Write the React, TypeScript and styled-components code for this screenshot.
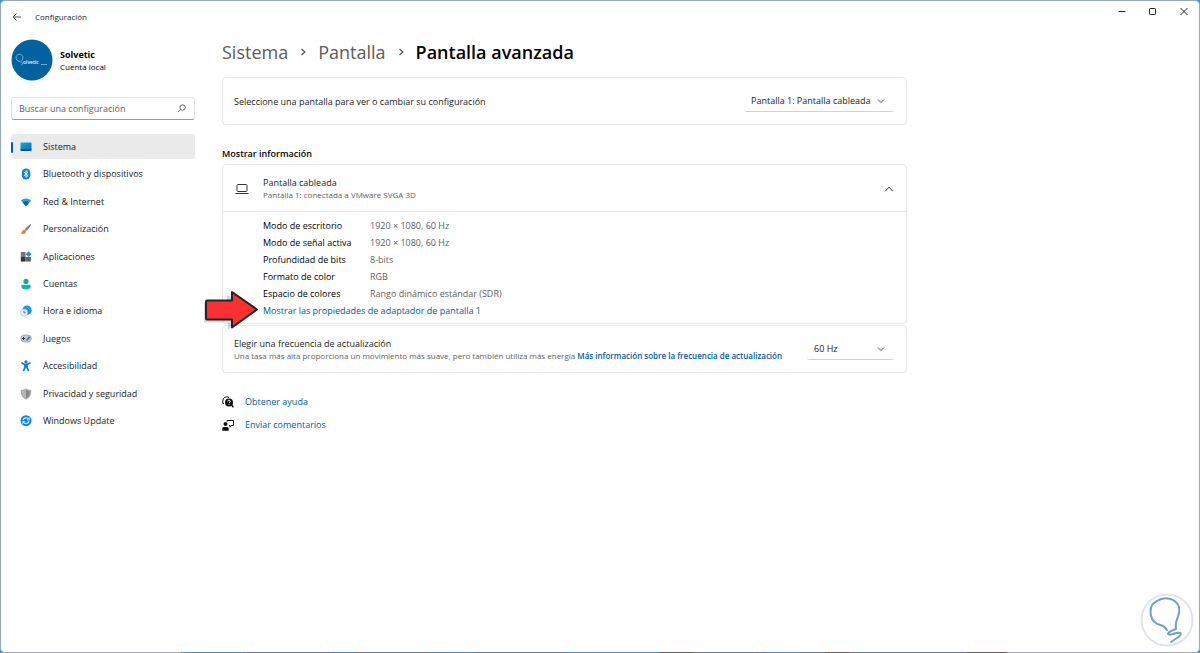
import React from "react";
import styled, { createGlobalStyle } from "styled-components";

const GlobalStyle = createGlobalStyle`
  *, *::before, *::after { box-sizing: border-box; }
  body {
    margin: 0;
    background: #4a90cf;
    font-family: "Open Sans", "Noto Sans", sans-serif;
    font-size: 9px;
    line-height: 12px;
    color: #1b1b1b;
  }
  button, input, select { font: inherit; color: inherit; }
  a { color: #005a9e; text-decoration: none; font-weight: 600; }
  ul, ol, dl, dd, h1, h2, p { margin: 0; padding: 0; list-style: none; font-weight: inherit; }
`;

const Window = styled.div`
  position: relative;
  display: flex;
  flex-direction: column;
  min-height: 100vh;
  background: #fff;
  border: 1px solid #94a9b5;
  border-bottom-color: #a8a9ae;
  border-radius: 5px;
`;

const TaskbarEdge = styled.div`
  position: absolute;
  left: 15%;
  right: 16%;
  bottom: -1px;
  height: 1px;
  background: linear-gradient(
    90deg,
    #4196c8 0 8%, #6c76a0 8% 18%, #3f92c8 18% 21%, #6c76a0 21% 30%, #4590c6 30% 36%,
    #6c76a0 36% 46%, #4c8fc8 46% 58%, #665e62 58% 62%, #6c76a0 62% 70%, #4c8fc8 70% 75%,
    #6c76a0 75% 78%, #665e62 78% 81%, #6c76a0 81% 95%, #665e62 95%
  );
`;

const TitleBar = styled.header`
  display: flex;
  align-items: flex-start;
  justify-content: space-between;
  height: 34px;
`;

const TitleGroup = styled.div`
  display: flex;
  align-items: center;
  gap: 12px;
  padding: 10px 0 0 10px;
  font-size: 8px;
`;

const IconButton = styled.button`
  display: flex;
  align-items: center;
  justify-content: center;
  padding: 0;
  border: 0;
  background: none;
  color: #222;
`;

const WindowControls = styled.div`
  display: flex;
`;

const ControlButton = styled(IconButton)`
  width: 31px;
  height: 20px;
`;

const Body = styled.div`
  display: flex;
  flex: 1;
  align-items: flex-start;
  gap: 27px;
  padding: 0 24px 24px 10px;
`;

const Sidebar = styled.aside`
  flex: 0 0 184px;
`;

const Account = styled.div`
  display: flex;
  align-items: center;
  gap: 7px;
  padding-top: 4px;
`;

const AccountText = styled.div`
  padding-top: 2px;
`;

const AccountName = styled.p`
  font-size: 9px;
  font-weight: 700;
  color: #000;
`;

const AccountKind = styled.p`
  font-size: 8px;
  color: #000;
`;

const SearchBox = styled.label`
  display: flex;
  align-items: center;
  height: 23px;
  margin-top: 16px;
  padding: 0 8px 0 7px;
  border: 1px solid #e4e4e4;
  border-bottom-color: #9a9a9a;
  border-radius: 3px;
`;

const SearchInput = styled.input`
  flex: 1;
  min-width: 0;
  padding: 0;
  border: 0;
  outline: 0;
  background: none;
  &::placeholder { color: #606060; opacity: 1; }
`;

const NavList = styled.ul`
  display: flex;
  flex-direction: column;
  justify-content: space-between;
  min-height: 299px;
  margin-top: 14px;
`;

const NavItem = styled.a<{ $active?: boolean }>`
  display: flex;
  align-items: center;
  gap: 10px;
  height: 25px;
  padding-top: 1px;
  border-radius: 3px;
  background: ${(p) => (p.$active ? "#eaeaea" : "transparent")};
  color: #1b1b1b;
  font-weight: 400;
  &::before {
    content: "";
    width: 2px;
    height: 11px;
    margin-right: -4px;
    border-radius: 1px;
    background: ${(p) => (p.$active ? "#0a57a8" : "transparent")};
  }
`;

const Main = styled.main`
  flex: 0 1 685px;
  min-width: 0;
`;

const Breadcrumb = styled.ol`
  display: flex;
  align-items: center;
  gap: 11px;
  padding-top: 5px;
  font-size: 18px;
  line-height: 24px;
  color: #5b5b5b;
`;

const Crumb = styled.li`
  display: flex;
  align-items: center;
  gap: 11px;
  a { color: inherit; font-weight: 500; }
  h1 { font-size: 18px; font-weight: 600; color: #000; }
`;

const Card = styled.section`
  border: 1px solid #e7e7e7;
  border-radius: 4px;
`;

const SettingCard = styled(Card)`
  display: flex;
  align-items: center;
  justify-content: space-between;
  gap: 16px;
  min-height: 48px;
  padding: 0 12px 0 11px;
`;

const SettingText = styled.div`
  padding-top: 2px;
`;

const PickerCard = styled(SettingCard)`
  margin-top: 13px;
`;

const SelectShell = styled.div<{ $width: number }>`
  display: grid;
  align-items: center;
  width: ${(p) => p.$width}px;
  height: 22px;
  border-bottom: 1px solid #d2d2d2;
  border-radius: 3px;
  > * { grid-area: 1 / 1; }
  svg { justify-self: end; margin-right: 9px; pointer-events: none; }
`;

const Select = styled.select`
  appearance: none;
  width: 100%;
  height: 21px;
  padding: 1px 20px 0 7px;
  border: 0;
  border-radius: 3px;
  background: none;
`;

const SectionTitle = styled.h2`
  margin: 23px 0 4px;
  font-size: 9px;
  font-weight: 600;
  color: #000;
`;

const DisplayHeader = styled.div`
  display: flex;
  align-items: center;
  gap: 14px;
  height: 47px;
  padding: 2px 12px 0 12px;
  border-bottom: 1px solid #e7e7e7;
`;

const Grow = styled.div`
  flex: 1;
`;

const Hint = styled.p`
  font-size: 8px;
  color: #616161;
`;

const Details = styled.div`
  padding: 5px 12px 4px 40px;
  line-height: 17px;
`;

const DetailList = styled.dl`
  display: grid;
  grid-template-columns: 107px 1fr;
  color: #000;
  dd { color: #616161; }
`;

const AdapterRow = styled.div`
  position: relative;
  a { font-weight: 500; }
`;

const Pointer = styled.svg`
  position: absolute;
  left: -62px;
  top: -12px;
  overflow: visible;
`;

const RateCard = styled(SettingCard)`
  margin-top: 1px;
`;

const HelpLinks = styled.ul`
  display: flex;
  flex-direction: column;
  gap: 11px;
  margin-top: 23px;
`;

const HelpLink = styled.a`
  display: flex;
  align-items: center;
  gap: 11px;
  font-weight: 500;
  svg { color: #111; }
`;

const Watermark = styled.svg`
  position: absolute;
  right: 5px;
  bottom: 5px;
`;

function Chevron({
  dir,
  size = 8,
  color = "#555",
  weight = 1,
}: {
  dir: "down" | "up" | "right";
  size?: number;
  color?: string;
  weight?: number;
}) {
  const d = { down: "M1 2.5 4 5.5 7 2.5", up: "M1 5.8 4 2.5 7 5.8", right: "M2.5 1 5.8 4 2.5 7" }[dir];
  return (
    <svg width={size} height={size} viewBox="0 0 8 8" fill="none" stroke={color} strokeWidth={weight} aria-hidden="true">
      <path d={d} />
    </svg>
  );
}

const icons: Record<string, React.ReactNode> = {
  system: (
    <>
      <defs>
        <linearGradient id="sys" x1="0" y1="0" x2="1" y2="1">
          <stop offset="0" stopColor="#0cb4d8" />
          <stop offset="1" stopColor="#0b62c0" />
        </linearGradient>
      </defs>
      <rect x="0.5" y="1.5" width="11" height="8.3" rx="0.8" fill="url(#sys)" />
      <path d="M.5 8.300h11v.8a.8.8 0 0 1-.8.8H1.300a.8.8 0 0 1-.8-.8z" fill="#0a4a98" />
    </>
  ),
  bluetooth: (
    <>
      <rect x="1.800" y="0.500" width="8.500" height="11" rx="4.200" fill="#0a84e0" />
      <path d="M4 4.200 8 7.700 6 9.300V2.700L8 4.300 4 7.800" fill="none" stroke="#fff" strokeWidth="0.900" />
    </>
  ),
  network: (
    <>
      <path d="M.8 4.600C3.800 1.700 8.200 1.700 11.200 4.600L6 10.300z" fill="#19a9e0" />
      <path d="M2.800 6.500C4.800 4.800 7.200 4.800 9.200 6.500L6 10.300z" fill="#0b5cad" />
    </>
  ),
  brush: (
    <>
      <path d="M11.300.8C9 1.700 5.800 4.800 4.600 6.800L6 8.100C8.200 6.600 10.800 3.300 11.300.8z" fill="#7c858c" />
      <path d="M4.400 6.800C2.200 6.700 2.300 9.200.8 10.300 2.500 11.500 6 11.300 6 8.300z" fill="#f08425" />
    </>
  ),
  apps: (
    <>
      <rect x="0.800" y="1" width="4.800" height="5" fill="#777" />
      <rect x="0.800" y="6" width="4.800" height="4.600" fill="#333" />
      <rect x="5.900" y="6" width="5" height="4.600" fill="#606468" />
      <path d="m8.600.3 2.900 2.900-2.900 2.900-2.900-2.900z" fill="#1a8fe0" />
    </>
  ),
  accounts: (
    <>
      <circle cx="6" cy="3.400" r="2.600" fill="#16a8a0" />
      <path d="M1.300 8.200q0-1.400 1.400-1.400h6.600q1.400 0 1.400 1.400c0 2.200-2 3.300-4.700 3.300S1.300 10.400 1.300 8.200z" fill="#12b8a0" />
    </>
  ),
  clock: (
    <>
      <circle cx="7" cy="5.300" r="4.700" fill="#0f8fe0" />
      <path d="M6 1.500q3 1 4 4" fill="none" stroke="#45c8f5" />
      <circle cx="4" cy="7.600" r="3.700" fill="#e6edf2" stroke="#a9c7dc" strokeWidth="0.500" />
      <path d="M4 5.600v2.200h1.500" fill="none" stroke="#456" strokeWidth="0.800" />
    </>
  ),
  games: (
    <>
      <rect x="0.800" y="2" width="10.500" height="7" rx="3.500" fill="#c3cad0" stroke="#8d969d" strokeWidth="0.700" />
      <path d="M2 5.500h3M3.500 4v3" stroke="#333" />
      <path d="m6.700 7.200 3-3.400" stroke="#1877d2" strokeWidth="1.600" />
    </>
  ),
  access: (
    <>
      <circle cx="6" cy="1.900" r="1.600" fill="#0a7ad6" />
      <path d="M1.500 2.700 4.700 4.500h2.600l3.200-1.800M5 4.500v3L3.300 11.200M7 4.500v3l1.700 3.700M6 4.500v3" fill="none" stroke="#0a7ad6" strokeWidth="1.700" />
    </>
  ),
  shield: (
    <>
      <path d="M6 .8C7.800 2 9.300 2.300 10.800 2.300c0 4.500-1 7-4.800 8.900C2.200 9.300 1.200 6.800 1.200 2.300 2.700 2.300 4.200 2 6 .8z" fill="#b4b4b4" stroke="#8a8a8a" strokeWidth="0.600" />
      <path d="M6 1.500v9c3-1.600 4-3.800 4-7.500C8.500 3 7.300 2.500 6 1.500z" fill="#888" />
    </>
  ),
  update: (
    <>
      <circle cx="6" cy="5.700" r="5.500" fill="#0a86dc" />
      <path d="M3 5.200C3.500 2.400 7.500 2 8.700 4.300M9 6.200C8.500 9 4.500 9.400 3.300 7.100" fill="none" stroke="#fff" strokeWidth="1.100" />
      <path d="M9.300 2.500v2.400H6.900M2.700 8.900V6.500h2.400" fill="none" stroke="#fff" strokeWidth="0.700" />
    </>
  ),
};

const navItems: [string, string][] = [
  ["system", "Sistema"],
  ["bluetooth", "Bluetooth y dispositivos"],
  ["network", "Red & Internet"],
  ["brush", "Personalización"],
  ["apps", "Aplicaciones"],
  ["accounts", "Cuentas"],
  ["clock", "Hora e idioma"],
  ["games", "Juegos"],
  ["access", "Accesibilidad"],
  ["shield", "Privacidad y seguridad"],
  ["update", "Windows Update"],
];

const NavIcon = styled.svg`
  margin: 0 1px;
`;

const details: [string, string][] = [
  ["Modo de escritorio", "1920 × 1080, 60 Hz"],
  ["Modo de señal activa", "1920 × 1080, 60 Hz"],
  ["Profundidad de bits", "8-bits"],
  ["Formato de color", "RGB"],
  ["Espacio de colores", "Rango dinámico estándar (SDR)"],
];

export default function App() {
  return (
    <>
      <GlobalStyle />
      <Window>
        <TitleBar>
          <TitleGroup>
            <IconButton aria-label="Atrás">
              <svg width="12" height="12" viewBox="0 0 12 12" fill="none" stroke="#555">
                <path d="M10 6H2M5.500 2.500 2 6l3.500 3.500" />
              </svg>
            </IconButton>
            <span>Configuración</span>
          </TitleGroup>
          <WindowControls>
            <ControlButton aria-label="Minimizar">
              <svg width="8" height="8" viewBox="0 0 8 8" stroke="#222"><path d="M.5 4.500h7" /></svg>
            </ControlButton>
            <ControlButton aria-label="Maximizar">
              <svg width="8" height="8" viewBox="0 0 8 8" fill="none" stroke="#222"><rect x="0.500" y="1.500" width="6" height="6" rx="0.800" /></svg>
            </ControlButton>
            <ControlButton aria-label="Cerrar">
              <svg width="8" height="8" viewBox="0 0 8 8" stroke="#222"><path d="m.5 1 7 7m0-7-7 7" /></svg>
            </ControlButton>
          </WindowControls>
        </TitleBar>
        <Body>
          <Sidebar>
            <Account>
              <svg width="42" height="42" viewBox="0 0 42 42" aria-hidden="true">
                <circle cx="21" cy="21" r="20.500" fill="#02619f" />
                <path d="M9 22.500C6 22.300 4.500 19.800 5.200 17.500 6.200 14.800 10.500 14.500 11.700 17.200 12.600 19.300 10.800 20.800 10.700 22.300M9 22.500l1.500 1M11 23.500q1.500 1-.5 1.800l1 .8M30 25.500h6" fill="none" stroke="#a9cbe6" strokeWidth="0.700" />
                <text x="12" y="25" fontSize="5" fontWeight="600" fill="#e4f0fa">olvetic</text>
              </svg>
              <AccountText>
                <AccountName>Solvetic</AccountName>
                <AccountKind>Cuenta local</AccountKind>
              </AccountText>
            </Account>
            <SearchBox>
              <SearchInput type="text" placeholder="Buscar una configuración" aria-label="Buscar una configuración" />
              <svg width="9" height="9" viewBox="0 0 9 9" fill="none" stroke="#555" strokeWidth="0.900" aria-hidden="true">
                <circle cx="5.500" cy="3.500" r="2.700" />
                <path d="M3.500 5.500.8 8.200" />
              </svg>
            </SearchBox>
            <nav aria-label="Configuración">
              <NavList>
                {navItems.map(([icon, label], i) => (
                  <li key={icon}>
                    <NavItem href="#" $active={i === 0}>
                      <NavIcon width="12" height="12" viewBox="0 0 12 12" aria-hidden="true">{icons[icon]}</NavIcon>
                      {label}
                    </NavItem>
                  </li>
                ))}
              </NavList>
            </nav>
          </Sidebar>
          <Main>
            <Breadcrumb>
              <Crumb><a href="#">Sistema</a><Chevron dir="right" weight={1.3} /></Crumb>
              <Crumb><a href="#">Pantalla</a><Chevron dir="right" weight={1.3} /></Crumb>
              <Crumb><h1>Pantalla avanzada</h1></Crumb>
            </Breadcrumb>
            <PickerCard>
              <SettingText>
                <label htmlFor="display">Seleccione una pantalla para ver o cambiar su configuración</label>
              </SettingText>
              <SelectShell $width={150}>
                <Select id="display"><option>Pantalla 1: Pantalla cableada</option></Select>
                <Chevron dir="down" />
              </SelectShell>
            </PickerCard>
            <SectionTitle>Mostrar información</SectionTitle>
            <Card>
              <DisplayHeader>
                <svg width="14" height="12" viewBox="0 0 14 12" fill="none" stroke="#333" aria-hidden="true">
                  <rect x="2" y="1.500" width="10" height="7" rx="1" />
                  <path d="M.5 10.500h13" />
                </svg>
                <Grow>
                  <p>Pantalla cableada</p>
                  <Hint>Pantalla 1: conectada a VMware SVGA 3D</Hint>
                </Grow>
                <IconButton aria-label="Contraer"><Chevron dir="up" size={10} color="#333" weight={0.8} /></IconButton>
              </DisplayHeader>
              <Details>
                <DetailList>
                  {details.map(([term, value]) => (
                    <React.Fragment key={term}>
                      <dt>{term}</dt>
                      <dd>{value}</dd>
                    </React.Fragment>
                  ))}
                </DetailList>
                <AdapterRow>
                  <a href="#">Mostrar las propiedades de adaptador de pantalla 1</a>
                  <Pointer width="60" height="40" viewBox="0 0 60 40" aria-hidden="true">
                    <path d="M3 12.500H26V4.500L52 21.500 27 39.500V32.500H3z" fill="#000" opacity="0.150" />
                    <path d="M6 10.500H31V2L56 19.500 31 37.500V29.500H6q-1 0-1-1v-17q0-1 1-1z" fill="#fb3030" stroke="#222428" strokeWidth="2" strokeLinejoin="round" />
                  </Pointer>
                </AdapterRow>
              </Details>
            </Card>
            <RateCard>
              <SettingText>
                <label htmlFor="rate">Elegir una frecuencia de actualización</label>
                <Hint>
                  Una tasa más alta proporciona un movimiento más suave, pero también utiliza más energía{" "}
                  <a href="#">Más información sobre la frecuencia de actualización</a>
                </Hint>
              </SettingText>
              <SelectShell $width={87}>
                <Select id="rate"><option>60 Hz</option></Select>
                <Chevron dir="down" />
              </SelectShell>
            </RateCard>
            <HelpLinks>
              <li>
                <HelpLink href="#">
                  <svg width="12" height="12" viewBox="0 0 12 12" aria-hidden="true">
                    <path d="M2 7.500H.8V5A4 4 0 0 1 7 1.500" fill="none" stroke="currentColor" />
                    <circle cx="7" cy="6.500" r="4" fill="currentColor" />
                    <path d="m9.500 9 2 2.300" stroke="currentColor" strokeWidth="1.500" />
                    <path d="M5.800 5.400q0-1.200 1.200-1.200T8.200 5.400Q8.200 6.200 7 6.900M7 7.800v1" fill="none" stroke="#fff" strokeWidth="0.900" />
                  </svg>
                  Obtener ayuda
                </HelpLink>
              </li>
              <li>
                <HelpLink href="#">
                  <svg width="12" height="12" viewBox="0 0 12 12" aria-hidden="true">
                    <circle cx="3.500" cy="5" r="2" fill="currentColor" />
                    <path d="M.3 11.800V9.500Q.3 8 1.800 8h3.400q1.500 0 1.500 1.500v2.300z" fill="currentColor" />
                    <path d="M5 2.500v-1h6.500v5h-2l-1.500 1.700V6.500H7" fill="none" stroke="currentColor" />
                  </svg>
                  Enviar comentarios
                </HelpLink>
              </li>
            </HelpLinks>
          </Main>
        </Body>
        <TaskbarEdge />
        <Watermark width="54" height="54" viewBox="0 0 54 54" fill="none" aria-hidden="true">
          <circle cx="27" cy="27" r="25.500" stroke="#dfe4ea" strokeWidth="2" />
          <path d="M27 37C24 31 20 33 16 30 9 25 8 12 17 8 24 3 36 5 39 14 41 23 34 27 36 35" stroke="#6f9fd0" strokeWidth="2" strokeLinecap="round" />
          <path d="M36 36C27 39 25 43 33 41 42 38 43 41 37 45L31 49" stroke="#6f9fd0" strokeWidth="2" strokeLinecap="round" />
        </Watermark>
      </Window>
    </>
  );
}
